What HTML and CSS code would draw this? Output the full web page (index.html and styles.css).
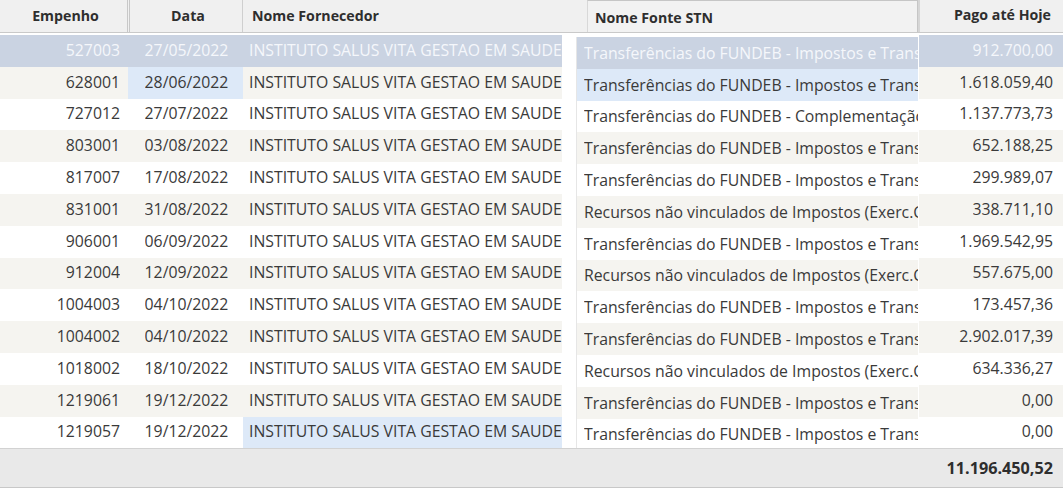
FILE: index.html
```html
<!DOCTYPE html>
<html lang="pt-BR">
<head>
<meta charset="utf-8">
<title>Empenhos</title>
<link rel="stylesheet" href="styles.css">
</head>
<body>
<div class="grid">
  <div class="head">
    <div class="hc h-emp">Empenho</div>
    <div class="hc h-data">Data</div>
    <div class="hc h-forn">Nome Fornecedor</div>
    <div class="hc h-fonte">Nome Fonte STN</div>
    <div class="hc h-pago">Pago até Hoje</div>
  </div>
  <div class="body">
    <div class="col c-emp">
      <div class="cell sel"><span>527003</span></div>
      <div class="cell alt"><span>628001</span></div>
      <div class="cell"><span>727012</span></div>
      <div class="cell alt"><span>803001</span></div>
      <div class="cell"><span>817007</span></div>
      <div class="cell alt"><span>831001</span></div>
      <div class="cell"><span>906001</span></div>
      <div class="cell alt"><span>912004</span></div>
      <div class="cell"><span>1004003</span></div>
      <div class="cell alt"><span>1004002</span></div>
      <div class="cell"><span>1018002</span></div>
      <div class="cell alt"><span>1219061</span></div>
      <div class="cell"><span>1219057</span></div>
    </div>
    <div class="col c-data">
      <div class="cell sel"><span>27/05/2022</span></div>
      <div class="cell focus"><span>28/06/2022</span></div>
      <div class="cell"><span>27/07/2022</span></div>
      <div class="cell alt"><span>03/08/2022</span></div>
      <div class="cell"><span>17/08/2022</span></div>
      <div class="cell alt"><span>31/08/2022</span></div>
      <div class="cell"><span>06/09/2022</span></div>
      <div class="cell alt"><span>12/09/2022</span></div>
      <div class="cell"><span>04/10/2022</span></div>
      <div class="cell alt"><span>04/10/2022</span></div>
      <div class="cell"><span>18/10/2022</span></div>
      <div class="cell alt"><span>19/12/2022</span></div>
      <div class="cell"><span>19/12/2022</span></div>
    </div>
    <div class="col c-forn">
      <div class="cell sel"><span>INSTITUTO SALUS VITA GESTAO EM SAUDE</span></div>
      <div class="cell alt"><span>INSTITUTO SALUS VITA GESTAO EM SAUDE</span></div>
      <div class="cell"><span>INSTITUTO SALUS VITA GESTAO EM SAUDE</span></div>
      <div class="cell alt"><span>INSTITUTO SALUS VITA GESTAO EM SAUDE</span></div>
      <div class="cell"><span>INSTITUTO SALUS VITA GESTAO EM SAUDE</span></div>
      <div class="cell alt"><span>INSTITUTO SALUS VITA GESTAO EM SAUDE</span></div>
      <div class="cell"><span>INSTITUTO SALUS VITA GESTAO EM SAUDE</span></div>
      <div class="cell alt"><span>INSTITUTO SALUS VITA GESTAO EM SAUDE</span></div>
      <div class="cell"><span>INSTITUTO SALUS VITA GESTAO EM SAUDE</span></div>
      <div class="cell alt"><span>INSTITUTO SALUS VITA GESTAO EM SAUDE</span></div>
      <div class="cell"><span>INSTITUTO SALUS VITA GESTAO EM SAUDE</span></div>
      <div class="cell alt"><span>INSTITUTO SALUS VITA GESTAO EM SAUDE</span></div>
      <div class="cell focus"><span>INSTITUTO SALUS VITA GESTAO EM SAUDE</span></div>
    </div>
    <div class="col c-fonte">
      <div class="cell sel"><span>Transferências do FUNDEB - Impostos e Transferências de Impostos</span></div>
      <div class="cell focus"><span>Transferências do FUNDEB - Impostos e Transferências de Impostos</span></div>
      <div class="cell"><span>Transferências do FUNDEB - Complementação da União - VAAT</span></div>
      <div class="cell alt"><span>Transferências do FUNDEB - Impostos e Transferências de Impostos</span></div>
      <div class="cell"><span>Transferências do FUNDEB - Impostos e Transferências de Impostos</span></div>
      <div class="cell alt"><span>Recursos não vinculados de Impostos (Exerc.Corrente)</span></div>
      <div class="cell"><span>Transferências do FUNDEB - Impostos e Transferências de Impostos</span></div>
      <div class="cell alt"><span>Recursos não vinculados de Impostos (Exerc.Corrente)</span></div>
      <div class="cell"><span>Transferências do FUNDEB - Impostos e Transferências de Impostos</span></div>
      <div class="cell alt"><span>Transferências do FUNDEB - Impostos e Transferências de Impostos</span></div>
      <div class="cell"><span>Recursos não vinculados de Impostos (Exerc.Corrente)</span></div>
      <div class="cell alt"><span>Transferências do FUNDEB - Impostos e Transferências de Impostos</span></div>
      <div class="cell"><span>Transferências do FUNDEB - Impostos e Transferências de Impostos</span></div>
    </div>
    <div class="col c-pago">
      <div class="cell sel"><span>912.700,00</span></div>
      <div class="cell alt"><span>1.618.059,40</span></div>
      <div class="cell"><span>1.137.773,73</span></div>
      <div class="cell alt"><span>652.188,25</span></div>
      <div class="cell"><span>299.989,07</span></div>
      <div class="cell alt"><span>338.711,10</span></div>
      <div class="cell"><span>1.969.542,95</span></div>
      <div class="cell alt"><span>557.675,00</span></div>
      <div class="cell"><span>173.457,36</span></div>
      <div class="cell alt"><span>2.902.017,39</span></div>
      <div class="cell"><span>634.336,27</span></div>
      <div class="cell alt"><span>0,00</span></div>
      <div class="cell"><span>0,00</span></div>
    </div>
  </div>
  <div class="foot">
    <div class="total">11.196.450,52</div>
  </div>
</div>
</body>
</html>
```

FILE: styles.css
```css
html, body {
  margin: 0;
  padding: 0;
  background: #ffffff;
}
body {
  font-family: "Open Sans", "Noto Sans", sans-serif;
  font-size: 15.8px;
  color: #3a3a3a;
  width: 1063px;
  height: 493px;
  overflow: hidden;
}
.grid {
  display: flex;
  flex-direction: column;
}
.head {
  display: flex;
  height: 32px;
  background: #f0f0f0;
  border-bottom: 1px solid #c9c9c9;
}
.hc {
  display: flex;
  align-items: center;
  font-weight: 700;
  font-size: 14.2px;
  color: #2e2e2e;
  box-sizing: border-box;
  border-right: 1px solid #cfcfcf;
  padding-bottom: 2px;
}
.h-emp { width: 130px; justify-content: center; border-right: 3px double #c8c8c8; padding-left: 4px; }
.h-data { width: 113px; justify-content: center; padding-left: 4px; }
.h-forn { width: 344px; padding-left: 9px; border-right: none; }
.h-fonte {
  width: 331px;
  padding-left: 7px;
  padding-top: 2px;
  padding-bottom: 0;
  border-top: 1px solid #c6c6c6;
  border-left: 1px solid #d8d8d8;
  border-right: 1px solid #c6c6c6;
  background: #f2f2f2;
}
.h-pago {
  flex: 1;
  justify-content: flex-end;
  padding-right: 12px;
  border-left: 2px solid #d6d6d6;
  border-right: none;
  padding-bottom: 4px;
}
.body {
  display: flex;
  padding-top: 2px;
}
.col {
  display: flex;
  flex-direction: column;
}
.cell {
  height: 31.8px;
  display: flex;
  align-items: center;
  white-space: nowrap;
  overflow: hidden;
  box-sizing: border-box;
  padding-bottom: 2px;
}
.cell span {
  min-width: 0;
  overflow: hidden;
  text-overflow: clip;
}
.alt { background: #f5f4f0; }
.sel { background: #cad3e2; color: #f5f7fb; }
.focus { background: #dde9f8; }

.c-emp { width: 128px; }
.c-emp .cell { justify-content: flex-end; padding-right: 8px; }
.c-data { width: 115px; }
.c-data .cell { justify-content: center; padding-left: 2px; }
.c-forn { width: 319px; }
.c-forn .cell { padding-left: 6px; }
.c-fonte {
  width: 341px;
  margin-left: 14px;
  margin-top: 2px;
  margin-bottom: -2px;
  border-left: 1px solid #e6e6e6;
}
.c-fonte .cell { padding-left: 7px; padding-bottom: 0; }
.c-pago { flex: 1; margin-left: 1px; }
.c-pago .cell { justify-content: flex-end; padding-right: 10px; }

.foot {
  height: 38px;
  background: #e9e9e9;
  border-top: 1px solid #d2d2d2;
  border-bottom: 1px solid #c8c8c8;
  display: flex;
  align-items: center;
  justify-content: flex-end;
}
.total {
  font-weight: 700;
  font-size: 16.2px;
  color: #2e2e2e;
  padding-right: 10px;
}
```
